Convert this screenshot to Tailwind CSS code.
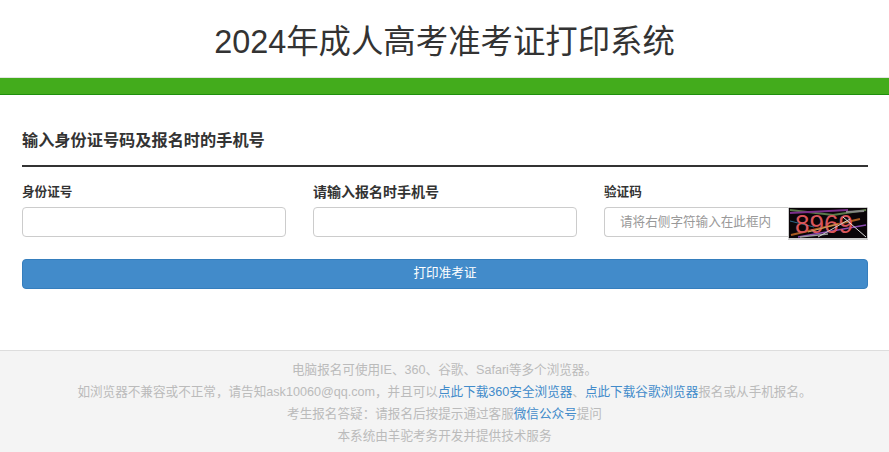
<!DOCTYPE html>
<html lang="zh-CN">

<head>
    <meta charset="UTF-8">
    <title>2024年成人高考准考证打印系统</title>
    <script src="https://cdn.jsdelivr.net/npm/@tailwindcss/browser@4"></script>
</head>

<body class="bg-white text-[#333] font-['Liberation_Sans','Noto_Sans_CJK_SC',sans-serif]">
    <header class="h-[77px] flex items-center justify-center">
        <h1 class="text-[32.4px] leading-none font-normal pt-[7px]">2024年成人高考准考证打印系统</h1>
    </header>
    <div class="h-[18px] bg-[#43ac1c] border-t border-t-[#e4e4e4] border-b border-b-[#1f8f0c]"></div>

    <main class="h-[255px] pl-[22px] pr-[21px] pt-[32px]">
        <h2 class="h-[40px] text-[16.2px] leading-[26px] font-bold border-b-2 border-b-[#333]">输入身份证号码及报名时的手机号</h2>

        <form class="grid grid-cols-3 gap-x-[27px] mt-[15px]">
            <div>
                <label class="block text-[12.6px] leading-[20px] font-bold mb-[5px]">身份证号</label>
                <input type="text" class="block w-full h-[30px] bg-white border border-[#ccc] rounded-[4px]">
            </div>
            <div>
                <label class="block text-[14px] leading-[20px] font-bold mb-[5px]">请输入报名时手机号</label>
                <input type="text" class="block w-full h-[30px] bg-white border border-[#ccc] rounded-[4px]">
            </div>
            <div>
                <label class="block text-[12.6px] leading-[20px] font-bold mb-[5px]">验证码</label>
                <div class="flex h-[30px]">
                    <input type="text" placeholder="请将右侧字符输入在此框内" class="flex-1 min-w-0 h-[30px] pl-[15px] text-[12.6px] bg-white border border-[#ccc] border-r-0 rounded-l-[4px] placeholder:text-[#999]">
                    <svg width="80" height="33" viewBox="0 0 80 33" class="block shrink-0 w-[80px] h-[33px]">
                        <rect x="0.5" y="0.5" width="79" height="31" rx="1" fill="#0a0508" stroke="#ccc" />
                        <path d="M0 32.5 H80" stroke="#ccc" />
                        <path d="M2 3 L45 8 L78 3" stroke="#5a7a4a" stroke-width="2" fill="none" />
                        <path d="M2 6 L60 3" stroke="#7a2f8a" stroke-width="2" fill="none" />
                        <path d="M58 5 L76 4" stroke="#888" stroke-width="2" fill="none" />
                        <path d="M3 28 L72 12" stroke="#a85a20" stroke-width="2" fill="none" />
                        <path d="M10 30 L78 18" stroke="#8a4ab0" stroke-width="1.5" fill="none" />
                        <path d="M12 30 L40 27" stroke="#999" stroke-width="1.5" fill="none" />
                        <path d="M2 14 L26 20" stroke="#2a6a8a" stroke-width="1" fill="none" />
                        <text x="7" y="26" font-family="Liberation Sans" font-size="26" fill="#d9565c">8969</text>
                        <path d="M55 10 L78 30" stroke="#ddd" stroke-width="1" fill="none" />
                        <path d="M30 30 L62 12" stroke="#ccc" stroke-width="1" fill="none" />
                        <path d="M20 25 L50 17" stroke="#c9a15a" stroke-width="1" fill="none" />
                    </svg>
                </div>
            </div>
        </form>

        <button class="block w-full h-[30px] mt-[22px] bg-[#428bca] border border-[#357ebd] rounded-[4px] text-white text-[12.6px] leading-[24px] pb-[3px]">打印准考证</button>
    </main>

    <footer class="h-[102px] bg-[#f4f4f4] border-t border-t-[#ddd] pt-[8px] text-center text-[12.6px] leading-[22px] text-[#bbb]">
        <p>电脑报名可使用IE、360、谷歌、Safari等多个浏览器。</p>
        <p>如浏览器不兼容或不正常，请告知ask10060@qq.com，并且可以<a href="#" class="text-[#428bca]">点此下载360安全浏览器</a>、<a href="#" class="text-[#428bca]">点此下载谷歌浏览器</a>报名或从手机报名。</p>
        <p>考生报名答疑：请报名后按提示通过客服<a href="#" class="text-[#428bca]">微信公众号</a>提问</p>
        <p>本系统由羊驼考务开发并提供技术服务</p>
    </footer>
</body>

</html>
